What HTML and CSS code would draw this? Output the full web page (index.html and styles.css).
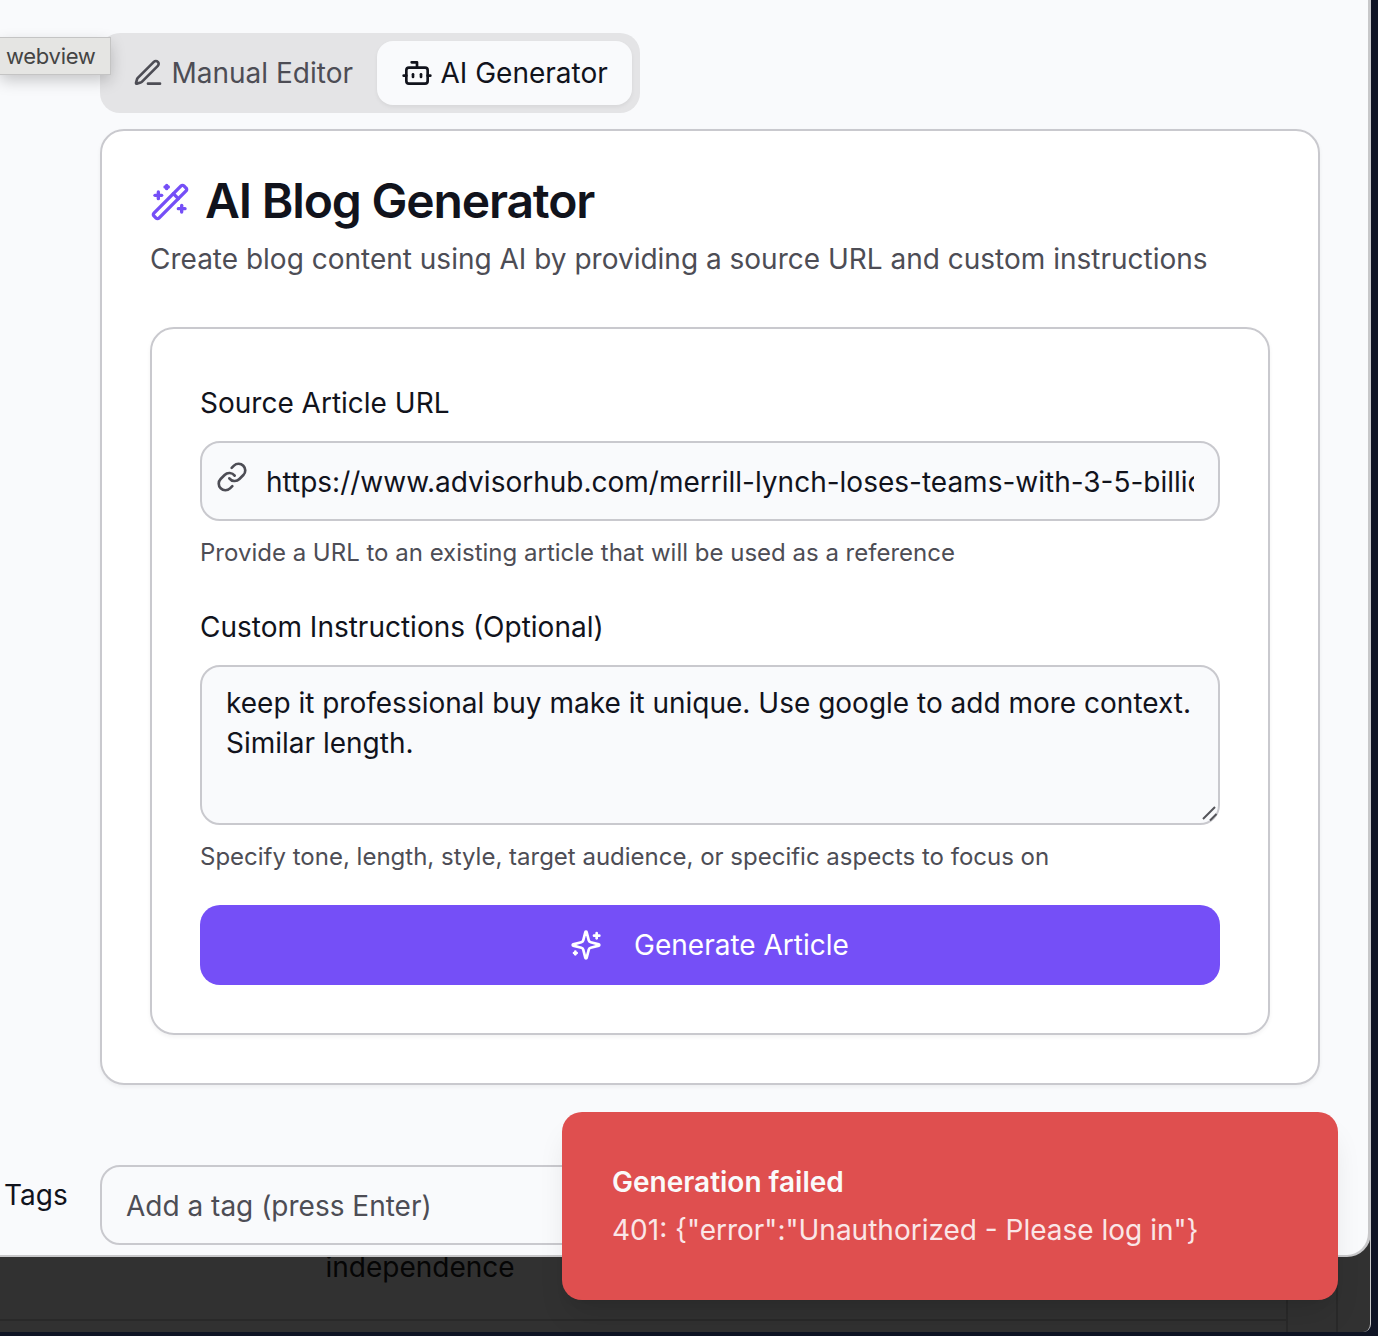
FILE: index.html
```html
<!DOCTYPE html>
<html lang="en">
<head>
<meta charset="utf-8">
<title>AI Blog Generator</title>
<link rel="stylesheet" href="styles.css">
</head>
<body>
<div class="page">
  <div class="page-row"><span class="page-cell">independence</span></div>
  <div class="page-side"></div>
</div>

<main class="dialog">
  <nav class="tabs">
    <button class="tab">
      <svg class="icon" viewBox="0 0 24 24"><path d="M12 20h9"/><path d="M16.376 3.622a1 1 0 0 1 3.002 3.002L7.368 18.635a2 2 0 0 1-.855.506l-2.872.838a.5.5 0 0 1-.62-.62l.838-2.872a2 2 0 0 1 .506-.854z"/></svg>
      <span>Manual Editor</span>
    </button>
    <button class="tab tab-active">
      <svg class="icon" viewBox="0 0 24 24"><path d="M12 8V4H8"/><rect width="16" height="12" x="4" y="8" rx="2"/><path d="M2 14h2"/><path d="M20 14h2"/><path d="M15 13v2"/><path d="M9 13v2"/></svg>
      <span>AI Generator</span>
    </button>
  </nav>

  <section class="card">
    <header class="card-header">
      <h1 class="title">
        <svg class="icon icon-wand" viewBox="0 0 24 24"><path d="m21.64 3.64-1.28-1.28a1.21 1.21 0 0 0-1.72 0L2.36 18.64a1.21 1.21 0 0 0 0 1.72l1.28 1.28a1.2 1.2 0 0 0 1.72 0L21.64 5.36a1.2 1.2 0 0 0 0-1.72"/><path d="m14 7 3 3"/><path d="M5 6v4"/><path d="M19 14v4"/><path d="M10 2v2"/><path d="M7 8H3"/><path d="M21 16h-4"/><path d="M11 3H9"/></svg>
        <span class="title-text">AI Blog Generator</span>
      </h1>
      <p class="description">Create blog content using AI by providing a source URL and custom instructions</p>
    </header>

    <form class="form">
      <div class="field">
        <label class="label" for="url">Source Article URL</label>
        <div class="control control-url">
          <svg class="icon icon-link" viewBox="0 0 24 24"><path d="M10 13a5 5 0 0 0 7.54.54l3-3a5 5 0 0 0-7.07-7.07l-1.72 1.71"/><path d="M14 11a5 5 0 0 0-7.54-.54l-3 3a5 5 0 0 0 7.07 7.07l1.71-1.71"/></svg>
          <input class="input" id="url" type="text" value="https://www.advisorhub.com/merrill-lynch-loses-teams-with-3-5-billion">
        </div>
        <p class="help">Provide a URL to an existing article that will be used as a reference</p>
      </div>
      <div class="field">
        <label class="label" for="instructions">Custom Instructions (Optional)</label>
        <div class="control control-area">
          <textarea class="textarea" id="instructions">keep it professional buy make it unique. Use google to add more context. Similar length.</textarea>
          <svg class="grip" viewBox="0 0 16 16"><path d="M1 12 13 0M8 13.5 14.5 7"/></svg>
        </div>
        <p class="help">Specify tone, length, style, target audience, or specific aspects to focus on</p>
      </div>
      <button class="submit" type="button">
        <svg class="icon" viewBox="0 0 24 24"><path d="M9.937 15.5A2 2 0 0 0 8.5 14.063l-6.135-1.582a.5.5 0 0 1 0-.962L8.5 9.936A2 2 0 0 0 9.937 8.5l1.582-6.135a.5.5 0 0 1 .963 0L14.063 8.5A2 2 0 0 0 15.5 9.937l6.135 1.581a.5.5 0 0 1 0 .964L15.5 14.063a2 2 0 0 0-1.437 1.437l-1.582 6.135a.5.5 0 0 1-.963 0z"/><path d="M20 3v4"/><path d="M22 5h-4"/><path d="M4 17v2"/><path d="M5 18H3"/></svg>
        <span>Generate Article</span>
      </button>
    </form>
  </section>

  <div class="tags">
    <label class="tags-label" for="tags">Tags</label>
    <input class="tags-input" id="tags" type="text" placeholder="Add a tag (press Enter)">
  </div>
</main>

<div class="tooltip">webview</div>

<div class="toast">
  <div class="toast-title">Generation failed</div>
  <div class="toast-text">401: {"error":"Unauthorized - Please log in"}</div>
</div>
</body>
</html>
```

FILE: styles.css
```css
* { box-sizing: border-box; }

body {
  position: relative;
  width: 1378px;
  height: 1336px;
  margin: 0;
  overflow: hidden;
  background: #0f1424;
  color: #11131c;
  font: 400 28px/40px Inter, "Liberation Sans", sans-serif;
}

h1, p { margin: 0; }

button, input, textarea {
  border: 0;
  outline: 0;
  margin: 0;
  padding: 0;
  background: none;
  color: inherit;
  font: inherit;
  letter-spacing: inherit;
}

.icon {
  flex: none;
  width: 32px;
  height: 32px;
  fill: none;
  stroke: currentColor;
  stroke-width: 2;
  stroke-linecap: round;
  stroke-linejoin: round;
}

/* Dimmed page behind the dialog */
.page {
  display: flex;
  width: 1371px;
  height: 1332px;
  border-right: 1px solid #c8c8c8;
  border-radius: 0 0 8px 0;
  background: #313131;
  overflow: hidden;
}

.page-row {
  width: 1288px;
  height: 1321px;
  padding: 1247px 0 0 325.5px;
  border-bottom: 2px solid #292929;
  color: #050505;
}

.page-side {
  border: solid #292929;
  border-width: 0 2px;
  margin-left: -2px;
  flex: 0 0 52px;
}

.dialog {
  position: absolute;
  top: 0;
  left: 0;
  width: 1371px;
  height: 1257px;
  padding: 32.5px 48px 0 0;
  border: solid #c8c8ca;
  border-width: 0 3px 2px 0;
  border-radius: 0 0 24px 0;
  background: #f9fafc;
}

.tabs {
  display: flex;
  width: 540px;
  height: 80px;
  margin-left: 100px;
  padding: 8px;
  border-radius: 20px;
  background: #e4e4e6;
  color: #4d4d55;
}

.tab {
  display: flex;
  align-items: center;
  gap: 7.5px;
  padding: 0 24px;
  border-radius: 16px;
  white-space: nowrap;
}

.tab-active {
  background: #f9fafc;
  color: #11131c;
  box-shadow: 0 2px 4px rgba(0, 0, 0, 0.06);
}

.card {
  height: 956px;
  margin: 16px 0 0 100px;
  padding: 48px;
  border: 2px solid #c9c9ce;
  border-radius: 24px;
  background: #fff;
  box-shadow: 0 2px 4px rgba(0, 0, 0, 0.05);
}

.card-header {
  height: 148px;
}

.title {
  display: flex;
  align-items: center;
  gap: 15px;
  font-size: 48px;
  font-weight: 600;
  line-height: 48px;
  letter-spacing: -1.16px;
}

.title-text { margin-top: -2px; }

.icon-wand {
  width: 40px;
  height: 40px;
  color: #754ff7;
}

.description {
  margin-top: 14px;
  color: #4d4d55;
  white-space: nowrap;
}

.form {
  height: 708px;
  padding: 60px 48px 48px;
  border: 2px solid #c9c9ce;
  border-radius: 24px;
  box-shadow: 0 2px 4px rgba(0, 0, 0, 0.05);
}

.field + .field { margin-top: 44px; }

.label {
  display: block;
  margin-bottom: 24px;
  line-height: 28px;
}

.control {
  position: relative;
  display: flex;
  border: 2px solid #c9c9ce;
  border-radius: 20px;
  background: #f9fafc;
}

.control-url {
  align-items: center;
  height: 80px;
  padding: 0 24px 0 14px;
  gap: 18px;
}

.icon-link {
  margin-top: -8px;
  color: #4d4d55;
}

.input {
  flex: 1;
  min-width: 0;
  margin-top: 2px;
}

.control-area {
  height: 160px;
  padding: 16px 24px;
}

.textarea {
  width: 100%;
  height: 120px;
  resize: none;
  overflow: hidden;
}

.grip {
  position: absolute;
  right: 0;
  bottom: 0;
  width: 16px;
  height: 16px;
  overflow: visible;
  fill: none;
  stroke: #55555a;
  stroke-width: 2;
}

.help {
  margin-top: 16px;
  color: #4d4d55;
  font-size: 24px;
  line-height: 32px;
}

.submit {
  display: flex;
  align-items: center;
  justify-content: center;
  gap: 32px;
  width: 100%;
  height: 80px;
  margin-top: 32px;
  padding-right: 1px;
  border-radius: 20px;
  background: #754ff7;
  color: #fff;
}

.tags {
  display: flex;
  margin-top: 80px;
}

.tags-label {
  width: 100px;
  padding: 10px 0 0 4px;
}

.tags-input {
  flex: 1;
  height: 80px;
  padding: 2px 24px 0;
  border: 2px solid #c9c9ce;
  border-radius: 20px;
}

.tags-input::placeholder {
  color: #4d4d55;
  opacity: 1;
}

.tooltip {
  position: absolute;
  top: 38px;
  left: 0;
  width: 110px;
  height: 36px;
  padding-left: 6px;
  background: #e5e5e3;
  box-shadow: 0 0 0 1px #c4c4c4, 0 6px 16px rgba(0, 0, 0, 0.22);
  color: #444;
  font-size: 22px;
  line-height: 36px;
  letter-spacing: -0.3px;
}

.toast {
  position: absolute;
  top: 1112px;
  left: 562px;
  width: 776px;
  height: 188px;
  padding: 50px;
  border-radius: 20px;
  background: #df4f4f;
  box-shadow: 0 20px 30px -6px rgba(0, 0, 0, 0.1), 0 8px 12px -8px rgba(0, 0, 0, 0.1);
  color: #fafafa;
  white-space: nowrap;
}

.toast-title {
  font-weight: 600;
}

.toast-text {
  margin-top: 8px;
  color: #fae6e7;
}
```
